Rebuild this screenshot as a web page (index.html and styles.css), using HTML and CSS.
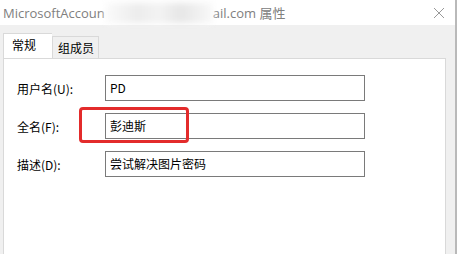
FILE: index.html
```html
<!DOCTYPE html>
<html lang="zh-CN">
<head>
    <meta charset="UTF-8">
    <title>属性</title>
    <link rel="stylesheet" href="styles.css">
</head>
<body>
    <div class="window">
        <div class="titlebar">
            <span class="title">MicrosoftAccoun</span><span class="blur"></span><span class="title">ail.com 属性</span>
            <span class="close">
                <svg width="12" height="12" viewBox="0 0 12 12"><path d="M1 1L11 11M11 1L1 11" stroke="#999" stroke-width="1"/></svg>
            </span>
        </div>
        <div class="content">
            <div class="tabs">
                <div class="tab active">常规</div>
                <div class="tab">组成员</div>
            </div>
            <div class="panel">
                <div class="row">
                    <label>用户名(U):</label>
                    <div class="field">PD</div>
                </div>
                <div class="row">
                    <label>全名(F):</label>
                    <div class="field">彭迪斯</div>
                </div>
                <div class="row">
                    <label>描述(D):</label>
                    <div class="field">尝试解决图片密码</div>
                </div>
                <div class="mark"></div>
            </div>
        </div>
    </div>
</body>
</html>
```

FILE: styles.css
```css
body {
    margin: 0;
    font-family: "Noto Sans CJK SC", "Noto Sans", sans-serif;
    font-size: 12px;
    color: #000;
}
.window {
    width: 455px;
    height: 254px;
    display: flex;
    flex-direction: column;
    border-right: 2px solid #b9b9b9;
    overflow: hidden;
}
.titlebar {
    height: 25px;
    background: #fff;
    display: flex;
    align-items: center;
    padding-left: 3px;
}
.title {
    font-family: "Open Sans", "Noto Sans CJK SC", sans-serif;
    font-size: 13px;
    color: #808080;
}
.blur {
    width: 108px;
    height: 20px;
    background: linear-gradient(90deg, #fbfbfb, #ececec 30%, #f3f3f3 50%, #e6e6e6 70%, #f9f9f9);
    filter: blur(3px);
}
.close {
    margin-left: auto;
    margin-right: 10px;
    display: flex;
}
.content {
    flex: 1;
    background: #f0f0f0;
    padding: 9px 9px 0 3px;
    display: flex;
    flex-direction: column;
}
.tabs {
    display: flex;
    align-items: flex-end;
    height: 24px;
    position: relative;
    z-index: 1;
}
.tab {
    height: 21px;
    padding: 0 4px 0 5px;
    border: 1px solid #d9d9d9;
    border-bottom: none;
    line-height: 21px;
    background: #f0f0f0;
}
.tab.active {
    height: 24px;
    line-height: 22px;
    width: 40px;
    padding: 0 0 0 8px;
    background: #fff;
    border-right: none;
}
.panel {
    flex: 1;
    background: #fff;
    border: 1px solid #d9d9d9;
    border-bottom: none;
    padding: 16px 0 0 13px;
    display: flex;
    flex-direction: column;
    gap: 12px;
    position: relative;
}
.row {
    display: flex;
    align-items: center;
}
.row label {
    width: 88px;
}
.field {
    width: 250px;
    height: 24px;
    border: 1px solid #7a7a7a;
    line-height: 24px;
    padding-left: 4px;
    padding-right: 4px;
}
.mark {
    position: absolute;
    left: 75px;
    top: 48px;
    width: 104px;
    height: 30px;
    border: 3px solid #e32b2b;
    border-radius: 4px;
}
```
